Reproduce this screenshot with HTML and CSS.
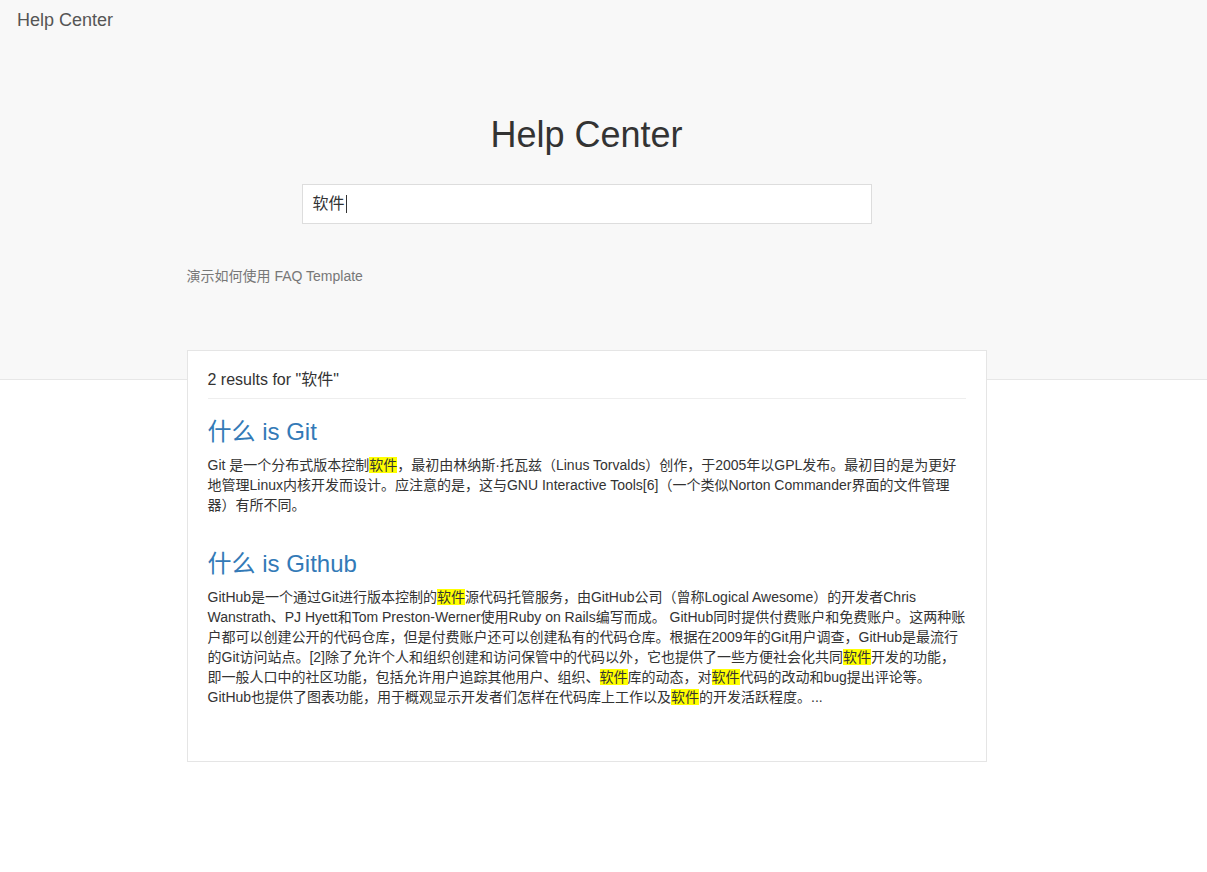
FILE: index.html
```html
<!DOCTYPE html>
<html lang="zh">
<head>
<meta charset="utf-8">
<title>Help Center</title>
<link rel="stylesheet" href="styles.css">
</head>
<body>
<header class="hero">
  <nav class="navbar"><a class="brand" href="#">Help Center</a></nav>
  <div class="inner">
    <h1 class="title">Help Center</h1>
    <div class="search"><span class="search-text">软件</span><span class="caret"></span></div>
    <p class="subtitle">演示如何使用 FAQ Template</p>
  </div>
</header>
<main class="inner">
  <section class="card">
    <div class="count">2 results for "软件"</div>
    <hr class="divider">
    <article class="result">
      <h2 class="result-title">什么 is Git</h2>
      <p class="result-text">Git 是一个分布式版本控制<mark class="hl">软件</mark>，最初由林纳斯·托瓦兹（Linus Torvalds）创作，于2005年以GPL发布。最初目的是为更好地管理Linux内核开发而设计。应注意的是，这与GNU Interactive Tools[6]（一个类似Norton Commander界面的文件管理器）有所不同。</p>
    </article>
    <article class="result">
      <h2 class="result-title">什么 is Github</h2>
      <p class="result-text">GitHub是一个通过Git进行版本控制的<mark class="hl">软件</mark>源代码托管服务，由GitHub公司（曾称Logical Awesome）的开发者Chris Wanstrath、PJ Hyett和Tom Preston-Werner使用Ruby on Rails编写而成。 GitHub同时提供付费账户和免费账户。这两种账户都可以创建公开的代码仓库，但是付费账户还可以创建私有的代码仓库。根据在2009年的Git用户调查，GitHub是最流行的Git访问站点。[2]除了允许个人和组织创建和访问保管中的代码以外，它也提供了一些方便社会化共同<mark class="hl">软件</mark>开发的功能，即一般人口中的社区功能，包括允许用户追踪其他用户、组织、<mark class="hl">软件</mark>库的动态，对<mark class="hl">软件</mark>代码的改动和bug提出评论等。GitHub也提供了图表功能，用于概观显示开发者们怎样在代码库上工作以及<mark class="hl">软件</mark>的开发活跃程度。...</p>
    </article>
  </section>
</main>
</body>
</html>
```
FILE: styles.css
```css
html, body {
  margin: 0;
  padding: 0;
  background: #fff;
  font-family: "Liberation Sans", Arial, "Noto Sans CJK SC", sans-serif;
  font-size: 14px;
  line-height: 20px;
  color: #333;
}

.hero {
  background: #f8f8f8;
  border-bottom: 1px solid #e7e7e7;
  padding-bottom: 93px;
}

.navbar {
  height: 40px;
  display: flex;
  align-items: center;
}

.brand {
  padding: 0 17px;
  font-size: 18px;
  line-height: 20px;
  color: #555;
  text-decoration: none;
}

.inner {
  width: 1173px;
  display: flex;
  flex-direction: column;
  align-items: center;
}

.title {
  margin: 75px 0 0;
  font-size: 36px;
  line-height: 40px;
  font-weight: 400;
  color: #333;
}

.search {
  margin-top: 29px;
  box-sizing: border-box;
  width: 570px;
  height: 40px;
  background: #fff;
  border: 1px solid #ddd;
  padding: 0 10px;
  display: flex;
  align-items: center;
  font-size: 16px;
  color: #333;
}

.caret {
  display: inline-block;
  width: 1px;
  height: 18px;
  background: #333;
  margin-left: 1px;
}

.subtitle {
  width: 800px;
  margin: 42px 0 0;
  color: #777;
  font-size: 14px;
  line-height: 20px;
}

.card {
  box-sizing: border-box;
  width: 800px;
  margin-top: -30px;
  background: #fff;
  border: 1px solid #e5e5e5;
  padding: 19px 20px 54px;
}

.count {
  font-size: 16px;
  line-height: 20px;
  color: #333;
}

.divider {
  margin: 8px 0 0;
  border: 0;
  border-top: 1px solid #eee;
}

.result-title {
  margin: 0;
  font-size: 24px;
  line-height: 30px;
  font-weight: 400;
  color: #337ab7;
}

.result:first-of-type .result-title {
  margin-top: 18px;
}

.result + .result {
  margin-top: 34px;
}

.result-text {
  margin: 8px 0 0;
}

.hl {
  background: #ff0;
  color: inherit;
  padding: 0;
}
```
